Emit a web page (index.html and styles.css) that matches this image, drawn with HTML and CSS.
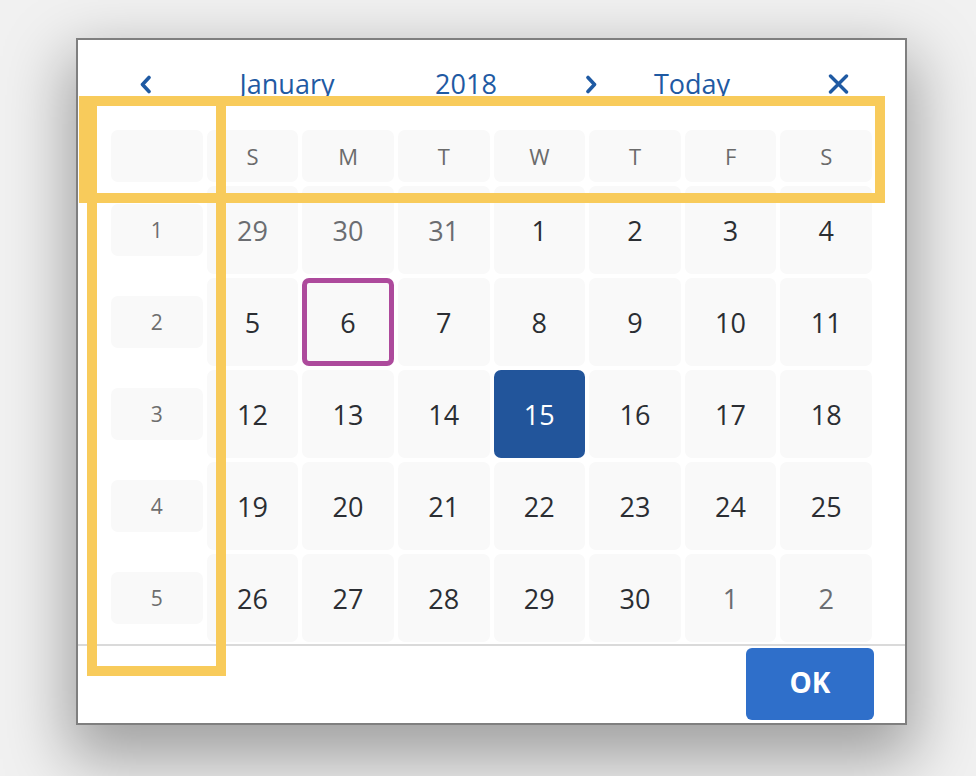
FILE: index.html
```html
<!DOCTYPE html>
<html lang="en">
<head>
    <meta charset="UTF-8">
    <meta name="viewport" content="width=device-width, initial-scale=1.0">
    <title>Date Picker</title>
    <link rel="stylesheet" href="styles.css">
</head>
<body>
    <div class="picker">
        <!-- month / year navigation -->
        <div class="picker-head">
            <span class="nav">
                <svg width="13" height="19" viewBox="0 0 13 19"><path d="M10 2.5 L3.5 9.5 L10 16.5" fill="none" stroke="currentColor" stroke-width="3.6" stroke-linecap="round" stroke-linejoin="round"/></svg>
            </span>
            <span class="label">January</span>
            <span class="label">2018</span>
            <span class="nav">
                <svg width="13" height="19" viewBox="0 0 13 19"><path d="M3 2.5 L9.5 9.5 L3 16.5" fill="none" stroke="currentColor" stroke-width="3.6" stroke-linecap="round" stroke-linejoin="round"/></svg>
            </span>
            <span class="label">Today</span>
            <span class="nav">
                <svg width="21" height="20" viewBox="0 0 21 20"><path d="M2.5 2 L18.5 18 M18.5 2 L2.5 18" fill="none" stroke="currentColor" stroke-width="3.4" stroke-linecap="round"/></svg>
            </span>
        </div>

        <!-- week numbers + days -->
        <div class="cal">
            <div class="cell corner"></div>
            <div class="cell dow">S</div>
            <div class="cell dow">M</div>
            <div class="cell dow">T</div>
            <div class="cell dow">W</div>
            <div class="cell dow">T</div>
            <div class="cell dow">F</div>
            <div class="cell dow">S</div>

            <div class="cell wk">1</div>
            <div class="cell day other">29</div>
            <div class="cell day other">30</div>
            <div class="cell day other">31</div>
            <div class="cell day">1</div>
            <div class="cell day">2</div>
            <div class="cell day">3</div>
            <div class="cell day">4</div>

            <div class="cell wk">2</div>
            <div class="cell day">5</div>
            <div class="cell day focus">6</div>
            <div class="cell day">7</div>
            <div class="cell day">8</div>
            <div class="cell day">9</div>
            <div class="cell day">10</div>
            <div class="cell day">11</div>

            <div class="cell wk">3</div>
            <div class="cell day">12</div>
            <div class="cell day">13</div>
            <div class="cell day">14</div>
            <div class="cell day selected">15</div>
            <div class="cell day">16</div>
            <div class="cell day">17</div>
            <div class="cell day">18</div>

            <div class="cell wk">4</div>
            <div class="cell day">19</div>
            <div class="cell day">20</div>
            <div class="cell day">21</div>
            <div class="cell day">22</div>
            <div class="cell day">23</div>
            <div class="cell day">24</div>
            <div class="cell day">25</div>

            <div class="cell wk">5</div>
            <div class="cell day">26</div>
            <div class="cell day">27</div>
            <div class="cell day">28</div>
            <div class="cell day">29</div>
            <div class="cell day">30</div>
            <div class="cell day other">1</div>
            <div class="cell day other">2</div>
        </div>

        <div class="picker-foot">
            <button class="ok">OK</button>
        </div>

        <!-- highlight marks -->
        <div class="mark mark-row"></div>
        <div class="mark mark-col"></div>
    </div>
</body>
</html>
```

FILE: styles.css
```css
*{
    margin: 0;
    padding: 0;
    box-sizing: border-box;
}
html, body {
    height: 100%;
    overflow: hidden;
}
body {
    background: #f1f1f1;
    font-family: "Open Sans", "Liberation Sans", sans-serif;
    padding: 38px 0 0 76px;
}
.picker {
    position: relative;
    width: 831px;
    background: #fff;
    border: 2px solid #7f7f7f;
    padding: 20px 0 2px 0;
    box-shadow: 0 26px 60px 8px rgba(0, 0, 0, 0.34);
}
.picker-head {
    display: grid;
    grid-template-columns: 134px 150px 208px 42px 160px 1fr;
    height: 48px;
    align-items: center;
    justify-items: center;
    color: #1f5aa3;
}
.label {
    font-size: 27px;
    line-height: 48px;
}
.nav {
    display: flex;
    align-items: center;
}
.cal {
    display: grid;
    grid-template-columns: repeat(8, 1fr);
    grid-template-rows: 52px repeat(5, 88px);
    gap: 4px;
    margin: 22px 33px 0 33px;
}
.cell {
    display: flex;
    align-items: center;
    justify-content: center;
    background: #f9f9f9;
    border-radius: 7px;
}
.dow {
    font-size: 22px;
    color: #6b6b6b;
}
.wk {
    align-self: center;
    height: 52px;
    font-size: 21px;
    color: #6e6e6e;
}
.day {
    font-size: 27px;
    color: #2b2e33;
}
.day.other {
    color: #6b6d71;
}
.day.focus {
    border: 5px solid #ad4a9c;
}
.day.selected {
    background: #22559b;
    color: #fff;
}
.picker-foot {
    margin-top: 2px;
    border-top: 2px solid #dadada;
    height: 77px;
    padding: 2px 31px 0 0;
    display: flex;
    justify-content: flex-end;
    align-items: flex-start;
}
.ok {
    width: 128px;
    height: 72px;
    border: none;
    border-radius: 6px;
    background: #2f6fca;
    color: #fff;
    font-family: "Open Sans", "Liberation Sans", sans-serif;
    font-size: 28px;
    font-weight: 700;
    padding-bottom: 4px;
}
.mark {
    position: absolute;
    border: 10px solid #f8cb5b;
}
.mark-row {
    left: 1px;
    top: 56px;
    width: 806px;
    height: 107px;
}
.mark-col {
    left: 9px;
    top: 56px;
    width: 139px;
    height: 580px;
}
```
